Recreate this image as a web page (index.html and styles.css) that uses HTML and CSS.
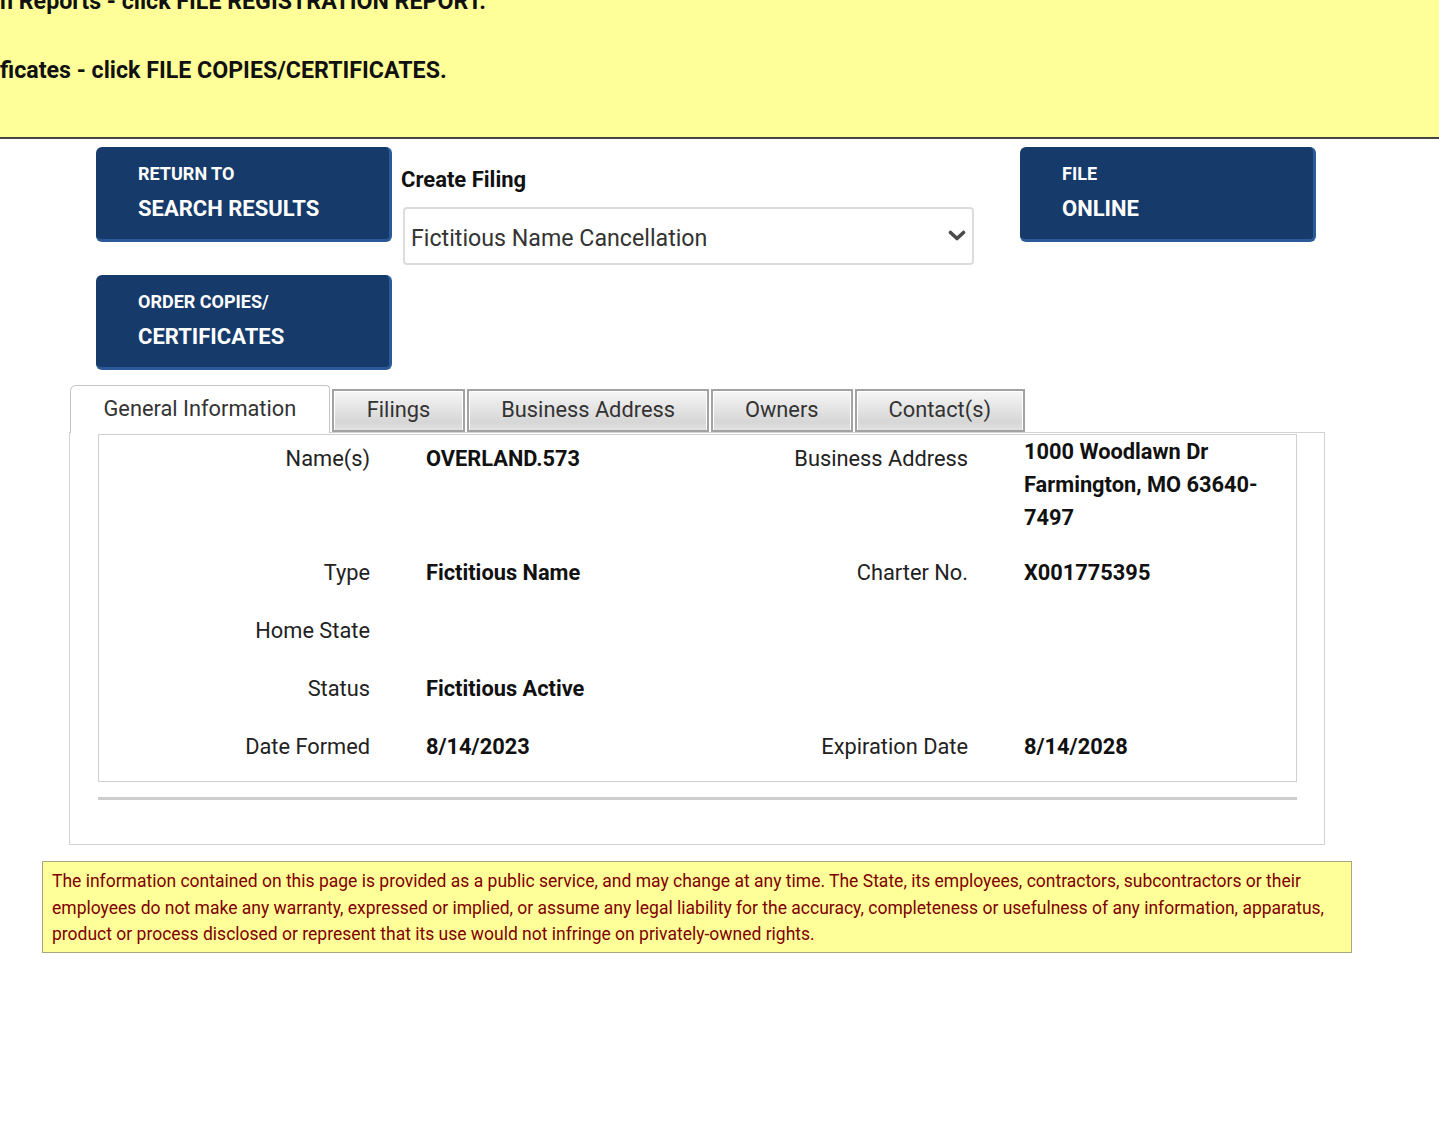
FILE: index.html
```html
<!DOCTYPE html>
<html lang="en">
<head>
<meta charset="utf-8">
<title>Business Entity Details</title>
<link rel="stylesheet" href="styles.css">
</head>
<body>
<div class="notice">
  <p class="notice-line first">n Reports - click FILE REGISTRATION REPORT.</p>
  <p class="notice-line">ficates - click FILE COPIES/CERTIFICATES.</p>
</div>

<div class="actions">
  <a class="btn btn-return" href="#"><span class="btn-small">RETURN TO</span><span class="btn-big">SEARCH RESULTS</span></a>
  <div class="create">
    <label class="create-label" for="filing">Create Filing</label>
    <div class="select-wrap">
      <select id="filing" class="select"><option>Fictitious Name Cancellation</option></select>
      <svg class="chev" width="18" height="12" viewBox="0 0 18 12"><path d="M2.5 2.5 L9 8.5 L15.5 2.5" fill="none" stroke="#4a4a4a" stroke-width="3.6" stroke-linecap="round" stroke-linejoin="round"/></svg>
    </div>
  </div>
  <a class="btn btn-file" href="#"><span class="btn-small">FILE</span><span class="btn-big">ONLINE</span></a>
  <a class="btn btn-order" href="#"><span class="btn-small">ORDER COPIES/</span><span class="btn-big">CERTIFICATES</span></a>
</div>

<div class="tabs-area">
  <ul class="tabs">
    <li class="tab active">General Information</li>
    <li class="tab tab-wide">Filings</li>
    <li class="tab">Business Address</li>
    <li class="tab">Owners</li>
    <li class="tab">Contact(s)</li>
  </ul>
  <div class="panel">
    <div class="details">
      <div class="lbl">Name(s)</div>
      <div class="val">OVERLAND.573</div>
      <div class="lbl">Business Address</div>
      <div class="val addr">1000 Woodlawn Dr<br>Farmington, MO 63640-<br>7497</div>

      <div class="lbl">Type</div>
      <div class="val">Fictitious Name</div>
      <div class="lbl">Charter No.</div>
      <div class="val">X001775395</div>

      <div class="lbl">Home State</div>
      <div class="val"></div>
      <div class="lbl"></div>
      <div class="val"></div>

      <div class="lbl">Status</div>
      <div class="val">Fictitious Active</div>
      <div class="lbl"></div>
      <div class="val"></div>

      <div class="lbl">Date Formed</div>
      <div class="val">8/14/2023</div>
      <div class="lbl">Expiration Date</div>
      <div class="val">8/14/2028</div>
    </div>
    <hr class="rule">
  </div>
</div>

<div class="disclaimer">The information contained on this page is provided as a public service, and may change at any time. The State, its employees, contractors, subcontractors or their employees do not make any warranty, expressed or implied, or assume any legal liability for the accuracy, completeness or usefulness of any information, apparatus, product or process disclosed or represent that its use would not infringe on privately-owned rights.</div>
</body>
</html>
```

FILE: styles.css
```css
html, body {
  margin: 0;
  padding: 0;
  background: #fff;
}
body {
  font-family: Roboto, "Liberation Sans", Arial, sans-serif;
  color: #222;
  width: 1439px;
  overflow: hidden;
}

/* yellow notice */
.notice {
  background: #ffff99;
  height: 137px;
  border-bottom: 2px solid #444;
  overflow: hidden;
}
.notice-line {
  margin: 43px 0 0 0;
  font-size: 23.2px;
  line-height: 26px;
  font-weight: 700;
  color: #111;
  white-space: nowrap;
}
.notice-line.first {
  margin-top: -12px;
}

/* action buttons */
.actions {
  display: grid;
  grid-template-columns: 296px 1fr 296px;
  grid-template-rows: 95px 95px;
  row-gap: 33px;
  width: 1220px;
  margin: 8px 0 0 96px;
}
.btn {
  display: block;
  box-sizing: border-box;
  height: 95px;
  background: #163a69;
  border-right: 3px solid #2b5a98;
  border-bottom: 3px solid #2b5a98;
  border-radius: 6px;
  padding: 16px 0 0 42px;
  color: #fff;
  text-decoration: none;
  font-weight: 700;
}
.btn-small {
  display: block;
  font-size: 18px;
  line-height: 22px;
}
.btn-big {
  display: block;
  margin-top: 10px;
  font-size: 22px;
  line-height: 28px;
}
.btn-return { grid-column: 1; grid-row: 1; }
.btn-file { grid-column: 3; grid-row: 1; }
.btn-order { grid-column: 1; grid-row: 2; }

.create {
  grid-column: 2;
  grid-row: 1 / span 2;
  padding: 19px 0 0 9px;
}
.create-label {
  display: block;
  font-size: 22px;
  line-height: 28px;
  font-weight: 700;
  color: #111;
}
.select-wrap {
  position: relative;
  width: 571px;
  margin: 13px 0 0 2px;
}
.select {
  display: block;
  width: 571px;
  height: 58px;
  box-sizing: border-box;
  -webkit-appearance: none;
  appearance: none;
  background: #fff;
  border: 2px solid #dcdcdc;
  border-radius: 4px;
  padding: 4px 40px 0 6px;
  font-family: Roboto, "Liberation Sans", Arial, sans-serif;
  font-size: 23.2px;
  color: #333;
}
.chev {
  position: absolute;
  right: 8px;
  top: 23px;
}

/* tabs */
.tabs-area {
  width: 1256px;
  margin: 15px 0 0 69px;
}
.tabs {
  display: flex;
  align-items: flex-end;
  gap: 2px;
  list-style: none;
  margin: 0 0 -1px 0;
  padding: 0 0 0 1px;
  position: relative;
  z-index: 2;
}
.tab {
  box-sizing: border-box;
  height: 43px;
  margin-bottom: 1px;
  padding: 0 32px 3px;
  border: 2px solid #a2a2a2;
  background: linear-gradient(to bottom, #f6f6f6 0%, #e4e4e4 45%, #d6d6d6 80%, #e2e2e2 100%);
  box-shadow: inset 1px 1px 0 #fff, inset -1px 0 0 #fff;
  font-size: 21.8px;
  line-height: 37px;
  color: #333;
  white-space: nowrap;
}
.tab.tab-wide {
  padding: 0 33px 3px;
}
.tab.active {
  height: 48px;
  margin-bottom: 0;
  padding: 0 32.5px 2px;
  border: 1px solid #c4c4c4;
  border-bottom: none;
  border-radius: 6px 4px 0 0;
  background: #fff;
  box-shadow: none;
  line-height: 45px;
}
.panel {
  position: relative;
  z-index: 1;
  border: 1px solid #d2d2d2;
  padding: 1px 27px 44px 28px;
}
.details {
  display: grid;
  grid-template-columns: 271px 330px 268px 1fr;
  border: 1px solid #cfcfcf;
  font-size: 21.8px;
  line-height: 33px;
}
.lbl {
  text-align: right;
  padding: 7px 0 18px;
  color: #222;
}
.val {
  padding: 7px 0 18px 56px;
  font-weight: 700;
  color: #111;
}
.val.addr {
  padding-top: 0;
  padding-bottom: 15px;
}
.rule {
  height: 3px;
  margin: 15px 0 0 0;
  border: none;
  background: #cdcdcd;
}

/* disclaimer */
.disclaimer {
  box-sizing: border-box;
  width: 1310px;
  margin: 16px 0 0 42px;
  padding: 6px 10px 4px 9px;
  background: #ffff99;
  border: 1px solid #aaa57c;
  color: #800000;
  font-size: 17.5px;
  line-height: 26.5px;
}
```
